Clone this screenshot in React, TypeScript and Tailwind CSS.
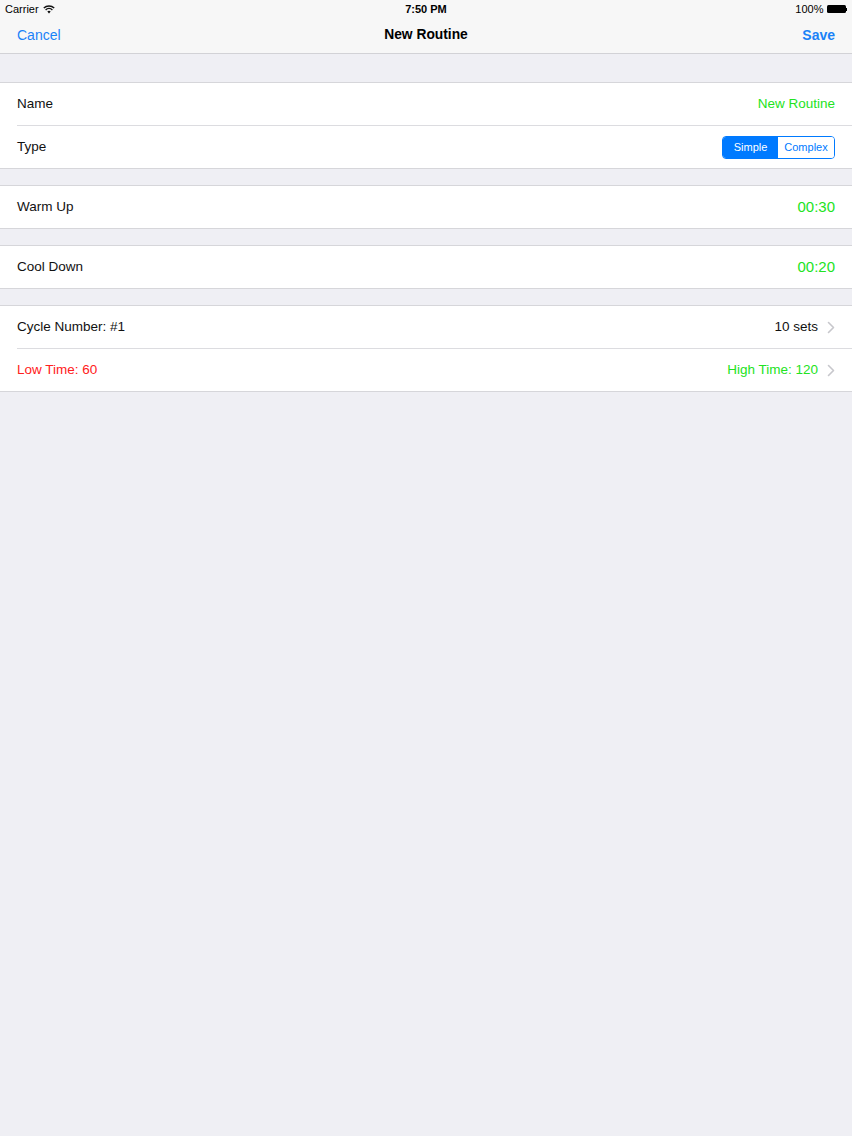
import React from "react";

const font = { fontFamily: '"Liberation Sans", Arial, sans-serif' };

function Chevron() {
  return (
    <svg width="8" height="13" viewBox="0 0 8 13" className="ml-[9px]">
      <path d="M1.5 1.5 L6.5 6.5 L1.5 11.5" fill="none" stroke="#c7c7cc" strokeWidth="1.6" strokeLinecap="round" strokeLinejoin="round" />
    </svg>
  );
}

function Row({ left, right, leftClass = "text-[#111]", rightClass = "", chevron = false, last = false, children }: { left: string; right?: string; leftClass?: string; rightClass?: string; chevron?: boolean; last?: boolean; children?: React.ReactNode }) {
  return (
    <div className="pl-[17px] bg-white">
      <div className={`h-[42px] box-content flex items-center justify-between pr-[17px] ${last ? "" : "border-b border-[#dcdce0]"}`}>
        <span className={`text-[13.5px] ${leftClass}`}>{left}</span>
        <div className="flex items-center">
          {right && <span className={`text-[13.5px] ${rightClass}`}>{right}</span>}
          {children}
          {chevron && <Chevron />}
        </div>
      </div>
    </div>
  );
}

function Section({ children, top }: { children: React.ReactNode; top: string }) {
  return <div className={`${top} border-y border-[#d6d6da] bg-white`}>{children}</div>;
}

export default function App() {
  return (
    <div className="w-[852px] h-[1136px] bg-[#efeff4] overflow-hidden" style={font}>
      <div className="bg-[#f7f7f7] border-b border-[#d2d2d6] h-[54px]">
        <div className="h-[18px] flex items-center justify-between px-[5px] text-[11px] text-black relative">
          <div className="flex items-center gap-[4px]">
            <span>Carrier</span>
            <svg width="12" height="9" viewBox="0 0 12 9">
              <path d="M6 8.5 L4.3 6.6 A2.5 2.5 0 0 1 7.7 6.6 Z" fill="#111" />
              <path d="M2.6 4.9 A4.9 4.9 0 0 1 9.4 4.9" stroke="#111" strokeWidth="1.4" fill="none" />
              <path d="M0.8 3.1 A7.4 7.4 0 0 1 11.2 3.1" stroke="#111" strokeWidth="1.4" fill="none" />
            </svg>
          </div>
          <span className="absolute left-1/2 -translate-x-1/2 font-semibold">7:50 PM</span>
          <div className="flex items-center gap-[3px]">
            <span>100%</span>
            <div className="flex items-center">
              <div className="w-[19px] h-[8px] bg-black rounded-[1.5px]" />
              <div className="w-[1.5px] h-[3px] bg-black" />
            </div>
          </div>
        </div>
        <div className="h-[35px] flex items-center justify-between px-[17px] relative">
          <span className="text-[14px] text-[#1a82f7]">Cancel</span>
          <span className="absolute left-1/2 -translate-x-1/2 text-[13.8px] font-semibold text-black">New Routine</span>
          <span className="text-[14px] font-semibold text-[#1a82f7]">Save</span>
        </div>
      </div>

      <Section top="mt-[28px]">
        <Row left="Name" right="New Routine" rightClass="text-[#22e322]" />
        <Row left="Type" last>
          <div className="flex h-[23px] border border-[#007aff] rounded-[4px] overflow-hidden text-[11px]">
            <div className="w-[55px] bg-[#007aff] text-white flex items-center justify-center">Simple</div>
            <div className="w-[56px] bg-white text-[#007aff] flex items-center justify-center">Complex</div>
          </div>
        </Row>
      </Section>

      <Section top="mt-[16px]">
        <Row left="Warm Up" right="00:30" rightClass="text-[#22e322] text-[15px]" last />
      </Section>

      <Section top="mt-[16px]">
        <Row left="Cool Down" right="00:20" rightClass="text-[#22e322] text-[15px]" last />
      </Section>

      <Section top="mt-[16px]">
        <Row left="Cycle Number: #1" right="10 sets" rightClass="text-[#111]" chevron />
        <Row left="Low Time: 60" leftClass="text-[#ff2020]" right="High Time: 120" rightClass="text-[#22e322]" chevron last />
      </Section>
    </div>
  );
}
